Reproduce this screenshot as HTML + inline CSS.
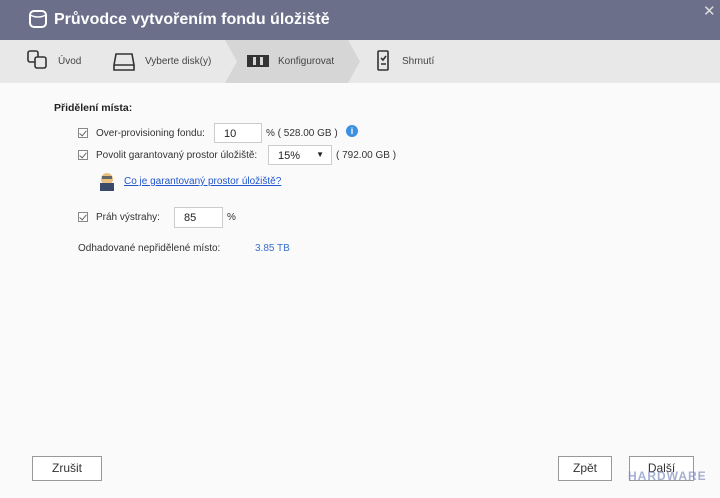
<!DOCTYPE html><html><head><meta charset="utf-8"><style>
*{margin:0;padding:0;box-sizing:border-box}
body{width:720px;height:498px;background:#fafafa;font-family:"Liberation Sans",sans-serif;position:relative;overflow:hidden;color:#333}
.a{position:absolute}
.hdr{left:0;top:0;width:720px;height:40px;background:#6b6f8a;color:#fff}
.steps{left:0;top:40px;width:720px;height:43px;background:#e8e8e8}
.t{font-size:10px;white-space:nowrap}
.cb{width:10px;height:10px;border:1px solid #888;background:#fff}
.cb:after{content:"";position:absolute;left:2px;top:0px;width:3px;height:6px;border-right:1.5px solid #666;border-bottom:1.5px solid #666;transform:rotate(40deg)}
.inp{background:#fff;border:1px solid #ccc;font-size:11px;padding:4px 0 0 9px;color:#222}
.btn{border:1px solid #999;background:#fff;font-size:12px;text-align:center;line-height:23px;color:#333}
</style></head><body>
<div class="a hdr">
<svg class="a" style="left:28px;top:9px" width="20" height="20" viewBox="0 0 20 20"><rect x="2" y="2" width="16" height="16" rx="4" fill="none" stroke="#fff" stroke-width="2"/><path d="M2 6 Q10 10 18 6" fill="none" stroke="#fff" stroke-width="1.5"/></svg>
<div class="a" style="left:54px;top:11px;font-size:16px;font-weight:bold">Průvodce vytvořením fondu úložiště</div>
<div class="a" style="left:703px;top:2px;font-size:15px;color:#ddd">✕</div>
</div>
<div class="a steps">
<svg class="a" style="left:0;top:0" width="720" height="43"><polygon points="225,0 348,0 360,21.5 348,43 225,43 237,21.5" fill="#d6d6d6"/>
<g fill="none" stroke="#333" stroke-width="1.6"><rect x="28" y="11" width="10" height="11" rx="2"/><rect x="35" y="17" width="11" height="11" rx="2" fill="#e8e8e8"/>
<path d="M114 25 L116 14 H132 L134 25 Z M114 25 V30 H134 V25"/>
<rect x="378" y="11" width="10" height="19" rx="1"/><path d="M381 18 l2 2 3-4 M381 24 h5"/></g>
<rect x="247" y="15" width="22" height="12" fill="#333"/><rect x="253" y="17" width="3" height="8" fill="#d6d6d6"/><rect x="260" y="17" width="3" height="8" fill="#d6d6d6"/>
</svg>
<div class="a t" style="left:58px;top:16px;color:#444">Úvod</div>
<div class="a t" style="left:145px;top:16px;color:#444">Vyberte disk(y)</div>
<div class="a t" style="left:278px;top:16px;color:#444">Konfigurovat</div>
<div class="a t" style="left:402px;top:16px;color:#444">Shrnutí</div>
</div>
<div class="a" style="left:54px;top:102px;font-size:10.5px;font-weight:bold;color:#222">Přidělení místa:</div>
<div class="a cb" style="left:78px;top:128px"></div>
<div class="a t" style="left:96px;top:128px">Over-provisioning fondu:</div>
<div class="a inp" style="left:214px;top:123px;width:48px;height:20px">10</div>
<div class="a t" style="left:266px;top:128px">% ( 528.00 GB )</div>
<div class="a" style="left:346px;top:125px;width:12px;height:12px;border-radius:50%;background:#3d8fe0;color:#fff;font-size:9px;font-weight:bold;text-align:center;line-height:12px">i</div>
<div class="a cb" style="left:78px;top:150px"></div>
<div class="a t" style="left:96px;top:150px">Povolit garantovaný prostor úložiště:</div>
<div class="a inp" style="left:268px;top:145px;width:64px;height:20px">15%<span style="position:absolute;right:7px;top:4px;font-size:8px">▼</span></div>
<div class="a t" style="left:336px;top:150px">( 792.00 GB )</div>
<svg class="a" style="left:97px;top:171px" width="20" height="20"><circle cx="10" cy="8" r="6" fill="#e9c080"/><rect x="3" y="12" width="14" height="8" fill="#3b4a6a"/><rect x="5" y="5" width="10" height="3" fill="#666"/></svg>
<div class="a t" style="left:124px;top:176px;color:#2255cc;text-decoration:underline">Co je garantovaný prostor úložiště?</div>
<div class="a cb" style="left:78px;top:212px"></div>
<div class="a t" style="left:96px;top:212px">Práh výstrahy:</div>
<div class="a inp" style="left:174px;top:207px;width:49px;height:21px">85</div>
<div class="a t" style="left:227px;top:212px">%</div>
<div class="a t" style="left:78px;top:243px">Odhadované nepřidělené místo:</div>
<div class="a t" style="left:255px;top:243px;color:#3a6ecc">3.85 TB</div>
<div class="a btn" style="left:32px;top:456px;width:70px;height:25px">Zrušit</div>
<div class="a btn" style="left:558px;top:456px;width:54px;height:25px">Zpět</div>
<div class="a btn" style="left:629px;top:456px;width:65px;height:25px">Další</div>
<div class="a" style="left:628px;top:469px;font-size:12px;font-weight:bold;color:#8090c0;opacity:.7;letter-spacing:1px">HARDWARE</div>
</body></html>
